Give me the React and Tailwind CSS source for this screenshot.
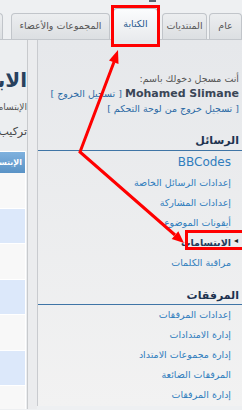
import React from "react";

const tabs = [
  { label: "عام", w: "w-[33px]", mr: "mr-0" },
  { label: "المنتديات", w: "w-[45px]", mr: "mr-[2px]" },
  { label: "الكتابة", w: "w-[45px]", mr: "mr-[4px]", active: true },
  { label: "المجموعات والأعضاء", w: "w-[99px]", mr: "mr-[3px]" },
  { label: "", w: "w-[24px]", mr: "mr-[8px]" },
];

const postingLinks = [
  { label: "BBCodes", latin: true },
  { label: "إعدادات الرسائل الخاصة" },
  { label: "إعدادات المشاركة" },
  { label: "أيقونات الموضوع" },
  { label: "الابتسامات", active: true },
  { label: "مراقبة الكلمات" },
];

const attachLinks = [
  "إعدادات المرفقات",
  "إدارة الامتدادات",
  "إدارة مجموعات الامتداد",
  "المرفقات الضائعة",
  "إدارة المرفقات",
];

function MenuHeading({ title, className }) {
  return (
    <div className={`pr-[3px] border-b border-[#3f75a6] text-[11px] leading-[15px] font-bold text-[#1d3350] ${className}`}>
      {title}
    </div>
  );
}

function Annotations() {
  return (
    <svg className="absolute inset-0 pointer-events-none" width="242" height="410" viewBox="0 0 242 410">
      <rect x="112.5" y="6.5" width="46" height="39" fill="none" stroke="#ff0000" strokeWidth="3" />
      <rect x="186.5" y="231.5" width="60" height="17" fill="none" stroke="#ff0000" strokeWidth="3" />
      <polyline points="114,62 80,152 175,235" fill="none" stroke="#ff0000" strokeWidth="3" strokeLinejoin="miter" />
      <polygon points="118,50 118.5,64 109,60.4" fill="#ff0000" />
      <polygon points="184,243 171.7,238.9 178.3,231.3" fill="#ff0000" />
    </svg>
  );
}

export default function App() {
  return (
    <div
      className="relative w-[242px] h-[410px] overflow-hidden bg-[#eef0f2]"
      style={{ fontFamily: '"DejaVu Sans", "Liberation Sans", sans-serif' }}
    >
      <div className="h-[9px] relative">
        <div className="absolute left-[149px] top-0 w-[7px] h-[2px] bg-[#5a6470]" />
      </div>

      {/* tabs */}
      <div dir="rtl" className="flex items-end h-[31px] border-b border-[#c3c7cc]">
        {tabs.map((t, i) => (
          <div
            key={i}
            className={`${t.w} ${t.mr} shrink-0 flex items-center justify-center border border-b-0 rounded-t-[4px] text-[9.5px] whitespace-nowrap overflow-hidden ${
              t.active
                ? "h-[32px] -mb-px bg-gradient-to-b from-[#fbfcfd] to-[#e9ebee] border-[#b9bec4] text-[#24578c]"
                : "h-[26px] bg-gradient-to-b from-[#eceef0] to-[#dcdfe2] border-[#c1c5ca] text-[#555]"
            }`}
          >
            {t.label}
          </div>
        ))}
      </div>

      {/* body */}
      <div className="flex h-[369px]">
        {/* content column */}
        <div dir="rtl" className="w-[28px] shrink-0 overflow-hidden border-r border-[#c8cacd] bg-[#eceef0] pr-[1px]">
          <div className="w-[200px] -mr-[1px]">
            <div className="pt-[29px] text-[20px] leading-[22px] font-bold text-[#28415e] whitespace-nowrap">الابتسامات</div>
            <div className="mt-[10px] text-[9px] leading-[12px] text-[#555] whitespace-nowrap">الإبتسامات المتوفرة في المنتدى</div>
            <div className="mt-[12px] text-[11px] leading-[14px] text-[#444] whitespace-nowrap">تركيب حزمة ابتسامات</div>
          </div>
          <div className="mt-[12px] w-[27px] border border-white bg-white">
            <div className="h-[21px] bg-gradient-to-b from-[#7fb1de] to-[#5a93c6] text-white text-[8px] font-bold leading-[21px] whitespace-nowrap overflow-hidden pr-[3px]">
              الإبتسامات
            </div>
            <div className="flex flex-col gap-px">
              <div className="h-[35px] bg-[#f8f8f8]" />
              <div className="h-[34px] bg-[#dce8fa]" />
              <div className="h-[35px] bg-[#f8f8f8]" />
              <div className="h-[34px] bg-[#dce8fa]" />
              <div className="h-[35px] bg-[#f8f8f8]" />
              <div className="h-[34px] bg-[#dce8fa]" />
              <div className="h-[40px] bg-[#f8f8f8]" />
            </div>
          </div>
        </div>

        {/* spacer strip */}
        <div className="w-[9px] shrink-0 bg-[#ebecee]" />

        {/* menu */}
        <div dir="rtl" className="flex-1 border-l border-[#c9cbcf] bg-gradient-to-b from-[#e6e8eb] to-[#f2f2f2] h-[366px]">
          <div className="pt-[31px] pr-[3px] text-[9.5px] leading-[15px] whitespace-nowrap">
            <div className="text-[#555]">أنت مسجل دخولك باسم:</div>
            <div>
              <span className="font-bold text-[#3a4656] text-[11px]">Mohamed Slimane</span>{" "}
              <span className="text-[#2c6aa5]">[ تسجيل الخروج ]</span>
            </div>
            <div className="text-[#2c6aa5]">[ تسجيل خروج من لوحة التحكم ]</div>
          </div>

          <MenuHeading title="الرسائل" className="mt-[17px] pb-[2px]" />
          <div className="pr-[11px]">
            {postingLinks.map((l) => (
              <div key={l.label} className="relative h-[20px] leading-[20px] whitespace-nowrap">
                {l.active && (
                  <span className="absolute -right-[7px] top-0 text-[8px] text-[#222]">◂</span>
                )}
                <span
                  className={
                    l.latin
                      ? "text-[12px] text-[#2f7dbd]"
                      : l.active
                      ? "text-[9.5px] font-bold text-[#1f3b5c]"
                      : "text-[9.5px] text-[#2f7dbd]"
                  }
                >
                  {l.label}
                </span>
              </div>
            ))}
          </div>

          <MenuHeading title="المرفقات" className="mt-[17px] pb-[1px]" />
          <div className="pr-[11px]">
            {attachLinks.map((l) => (
              <div key={l} className="h-[20px] leading-[20px] text-[9.5px] text-[#2f7dbd] whitespace-nowrap">
                {l}
              </div>
            ))}
          </div>
        </div>
      </div>

      <Annotations />
    </div>
  );
}
